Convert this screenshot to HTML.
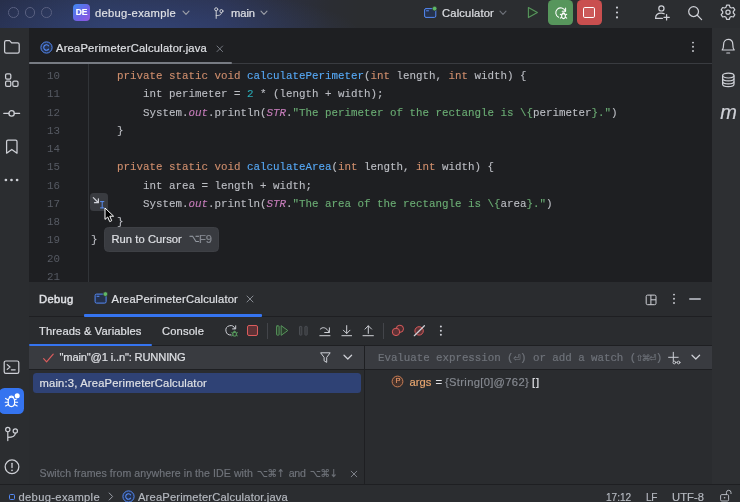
<!DOCTYPE html>
<html lang="en">
<head>
<meta charset="utf-8">
<title>debug-example – AreaPerimeterCalculator.java</title>
<style>
*{box-sizing:border-box;margin:0;padding:0}
html,body{width:740px;height:502px;overflow:hidden;background:#2b2d30}
body{position:relative;font-family:"Liberation Sans",sans-serif;font-size:11px;color:#dfe1e5;-webkit-font-smoothing:antialiased}
.abs{position:absolute}
.t{position:absolute;white-space:pre;line-height:14px;-webkit-text-stroke:0.18px currentColor}
svg{position:absolute;overflow:visible}

/* title bar */
#title{left:0;top:0;width:740px;height:28.5px;background:radial-gradient(ellipse 210px 46px at 150px 34px, rgba(58,84,160,.45) 0%, rgba(58,84,160,0) 100%),linear-gradient(90deg,#272f4b 0px,#2c3757 100px,#2c3350 220px,#2b2d33 330px,#2b2d30 360px,#2b2d30 740px)}
.dot{position:absolute;top:7.4px;width:10.8px;height:10.8px;border-radius:50%;border:1px solid #596080}

/* strips */
#lstrip{left:0;top:28px;width:29.5px;height:456px;background:#2b2d30;border-right:1px solid #1e1f22}
#rstrip{left:712px;top:28px;width:29px;height:456px;background:#2d2f32}

/* editor */
#editor{left:29px;top:28px;width:683px;height:254px;background:#1e1f22}
#tabline{left:29px;top:63px;width:683px;height:1px;background:#393b40}
#tabul{left:29px;top:61.7px;width:203px;height:2.5px;background:#777b83;border-radius:1px}
#gutline{left:88px;top:64px;width:1px;height:218px;background:#313438}
.ln{position:absolute;left:40px;width:20px;text-align:right;font-family:"Liberation Mono",monospace;font-size:10.8px;color:#565a63;line-height:14px}
.code{position:absolute;left:91px;white-space:pre;-webkit-text-stroke:0.12px currentColor;font-family:"Liberation Mono",monospace;font-size:10.83px;color:#bcbec4;line-height:14px}
.k{color:#cf8e6d}.f{color:#56a8f5}.n{color:#2aacb8}.s{color:#6aab73}.i{color:#c77dbb;font-style:italic}

/* debug panel */
#split{left:29px;top:282px;width:682px;height:2px;background:#2a2c2f}
#dbg{left:29px;top:282px;width:683px;height:202px;background:#2a2c2f}
.hl{position:absolute;height:1px;background:#1e1f22}

.sym{display:inline-flex;justify-content:center;width:6.5px;font-family:"DejaVu Sans","DejaVu Sans Mono",sans-serif;font-size:8.6px;letter-spacing:0;vertical-align:baseline}
.sy2{font-family:"DejaVu Sans","Liberation Sans",sans-serif}
/* status */
#status{left:0;top:484px;width:740px;height:18px;background:#2b2d30;border-top:1px solid #1e1f22}
</style>
</head>
<body>
<div id="root" style="position:absolute;left:0;top:0;width:740px;height:502px;will-change:transform">

<div id="title" class="abs"></div>
<div class="dot" style="left:8.1px"></div>
<div class="dot" style="left:24.7px"></div>
<div class="dot" style="left:41.1px"></div>


<!-- ===== title bar content ===== -->
<div class="abs" style="left:73px;top:4px;width:17px;height:17px;border-radius:4px;background:linear-gradient(135deg,#3d8bf0 0%,#6d63e8 55%,#9556e0 100%)"></div>
<div class="t" style="left:73px;top:6px;width:17px;text-align:center;font-weight:bold;font-size:8.5px;line-height:13px;color:#fff;letter-spacing:-0.2px">DE</div>
<div class="t" id="tproj" style="left:95px;top:6px;font-size:11.2px;letter-spacing:0.298px">debug-example</div>
<svg style="left:182px;top:10px" width="8" height="6" viewBox="0 0 8 6"><path d="M1 1.2 L4 4.3 L7 1.2" fill="none" stroke="#9da0a8" stroke-width="1.1" stroke-linecap="round" stroke-linejoin="round"/></svg>
<!-- branch icon -->
<svg style="left:212px;top:6px" width="12" height="14" viewBox="0 0 12 14"><g fill="none" stroke="#ced0d6" stroke-width="1" stroke-linecap="round"><circle cx="4.2" cy="3.3" r="1.55"/><circle cx="9.4" cy="5.1" r="1.55"/><path d="M4.2 4.9 V12.4 M9.4 6.7 C9.4 8.7 8 9.6 4.2 9.6"/></g></svg>
<div class="t" id="tmain" style="left:231px;top:6px;font-size:11.2px;letter-spacing:-0.062px">main</div>
<svg style="left:260px;top:10px" width="8" height="6" viewBox="0 0 8 6"><path d="M1 1.2 L4 4.3 L7 1.2" fill="none" stroke="#9da0a8" stroke-width="1.1" stroke-linecap="round" stroke-linejoin="round"/></svg>

<!-- run config -->
<svg style="left:424px;top:6px" width="14" height="13" viewBox="0 0 14 13"><rect x="0.6" y="2.6" width="11.2" height="8.8" rx="1.4" fill="#25324d" stroke="#548af7" stroke-width="1"/><path d="M2.5 4.8h2" stroke="#548af7" stroke-width="1" stroke-linecap="round"/><circle cx="10.6" cy="2.6" r="2.3" fill="#5fb865" stroke="#2b2d30" stroke-width="0.6"/></svg>
<div class="t" id="tcalc" style="left:442px;top:6px;font-size:11.2px;letter-spacing:0.163px">Calculator</div>
<svg style="left:499px;top:10px" width="8" height="6" viewBox="0 0 8 6"><path d="M1 1.2 L4 4.3 L7 1.2" fill="none" stroke="#6f737a" stroke-width="1.1" stroke-linecap="round" stroke-linejoin="round"/></svg>
<!-- play -->
<svg style="left:526px;top:6px" width="13" height="13" viewBox="0 0 13 13"><path d="M2.4 1.6 L11.4 6.6 L2.4 11.6 Z" fill="#27362a" stroke="#57965c" stroke-width="1.1" stroke-linejoin="round"/></svg>
<!-- green debug-rerun button -->
<div class="abs" style="left:548.2px;top:0.2px;width:25px;height:24.7px;border-radius:4.5px;background:#57965c"></div>
<svg style="left:554px;top:5px" width="15" height="15" viewBox="0 0 15 15"><g fill="none" stroke="#fff" stroke-width="1.05" stroke-linecap="round" stroke-linejoin="round"><path d="M11.3 6.1 A4.9 4.9 0 1 0 4.6 12.2"/><path d="M11.6 2.9 V6.3 H8.2"/><ellipse cx="9.5" cy="11.1" rx="1.9" ry="2.5" fill="#57965c"/><path d="M8.3 8.6 A1.3 1.3 0 0 1 10.7 8.6"/><path d="M7.6 10 L6.3 9.3 M7.6 12.2 L6.3 13.2 M11.4 10 L12.7 9.3 M11.4 12.2 L12.7 13.2"/></g></svg>
<!-- red stop button -->
<div class="abs" style="left:576.8px;top:0.2px;width:24.9px;height:24.7px;border-radius:4.5px;background:#c94f4f"></div>
<div class="abs" style="left:583.2px;top:6.9px;width:11.4px;height:11.2px;border:1.2px solid #fff;border-radius:1.8px;background:rgba(255,255,255,.07)"></div>
<!-- kebab -->
<svg style="left:615px;top:5px" width="4" height="15" viewBox="0 0 4 15"><g fill="#ced0d6"><circle cx="2" cy="2.6" r="1.05"/><circle cx="2" cy="7.5" r="1.05"/><circle cx="2" cy="12.4" r="1.05"/></g></svg>
<!-- add user -->
<svg style="left:654px;top:4px" width="17" height="17" viewBox="0 0 17 17"><g fill="none" stroke="#ced0d6" stroke-width="1.22" stroke-linecap="round" stroke-linejoin="round"><circle cx="7.4" cy="4.4" r="2.6"/><path d="M1.6 14.4 C1.6 10.8 4 9.2 7.2 9.2 C8.4 9.2 9.4 9.4 10.2 9.8"/><path d="M1.6 14.4 H8.4"/><path d="M12.6 10.6 V16 M9.9 13.3 H15.3"/></g></svg>
<!-- search -->
<svg style="left:687px;top:5px" width="16" height="16" viewBox="0 0 16 16"><g fill="none" stroke="#ced0d6" stroke-width="1.25" stroke-linecap="round"><circle cx="6.6" cy="6.6" r="4.9"/><path d="M10.3 10.3 L14.6 14.6"/></g></svg>
<!-- gear -->
<svg style="left:720px;top:4px" width="16" height="17" viewBox="0 0 16 17"><g fill="none" stroke="#ced0d6" stroke-width="1.22" stroke-linejoin="round"><path d="M6.6 1.2 H9.4 L10 3.3 L11.3 4 L13.4 3.5 L14.8 5.9 L13.3 7.5 V9 L14.8 10.6 L13.4 13 L11.3 12.5 L10 13.2 L9.4 15.3 H6.6 L6 13.2 L4.7 12.5 L2.6 13 L1.2 10.6 L2.7 9 V7.5 L1.2 5.9 L2.6 3.5 L4.7 4 L6 3.3 Z"/><circle cx="8" cy="8.25" r="2.1"/></g></svg>

<div id="lstrip" class="abs"></div>
<div id="rstrip" class="abs"></div>
<div id="editor" class="abs"></div>
<div id="tabline" class="abs"></div>
<div id="tabul" class="abs"></div>
<div id="gutline" class="abs"></div>

<!-- ===== left strip icons ===== -->
<svg style="left:3px;top:39px" width="18" height="16" viewBox="0 0 18 16"><path d="M1.6 3.2 Q1.6 1.6 3.2 1.6 H6.6 L8.6 3.8 H14.6 Q16.2 3.8 16.2 5.4 V12.6 Q16.2 14.2 14.6 14.2 H3.2 Q1.6 14.2 1.6 12.6 Z" fill="none" stroke="#ced0d6" stroke-width="1.25" stroke-linejoin="round"/></svg>
<svg style="left:4px;top:72px" width="16" height="16" viewBox="0 0 16 16"><g fill="none" stroke="#ced0d6" stroke-width="1.25"><rect x="1.6" y="1.8" width="5.2" height="5.2" rx="1.3"/><rect x="1.6" y="9.2" width="5.2" height="5.2" rx="1.3"/><rect x="8.8" y="9.2" width="5.2" height="5.2" rx="1.3"/></g></svg>
<svg style="left:3px;top:108px" width="18" height="10" viewBox="0 0 18 10"><g fill="none" stroke="#ced0d6" stroke-width="1.25" stroke-linecap="round"><circle cx="8.6" cy="5.4" r="2.7"/><path d="M0.8 5.4 H5.9 M11.3 5.4 H16.6"/></g></svg>
<svg style="left:5px;top:139px" width="14" height="16" viewBox="0 0 14 16"><path d="M1.6 2.6 Q1.6 1.2 3 1.2 H10.6 Q12 1.2 12 2.6 V14.2 L6.8 10.4 L1.6 14.2 Z" fill="none" stroke="#ced0d6" stroke-width="1.25" stroke-linejoin="round"/></svg>
<svg style="left:4px;top:178px" width="16" height="4" viewBox="0 0 16 4"><g fill="#ced0d6"><circle cx="1.9" cy="2" r="1.35"/><circle cx="7.5" cy="2" r="1.35"/><circle cx="13.1" cy="2" r="1.35"/></g></svg>
<!-- terminal -->
<svg style="left:3px;top:360px" width="18" height="15" viewBox="0 0 18 15"><g fill="none" stroke="#ced0d6" stroke-width="1.22" stroke-linecap="round" stroke-linejoin="round"><rect x="1.2" y="1" width="14.6" height="12.4" rx="1.6"/><path d="M4.2 4.6 L7 7 L4.2 9.4 M8.4 9.8 H12.2"/></g></svg>
<!-- debug (selected) -->
<div class="abs" style="left:-1px;top:388px;width:25px;height:25.5px;border-radius:5.5px;background:#3574f0"></div>
<svg style="left:3px;top:392px" width="18" height="18" viewBox="0 0 18 18"><g fill="none" stroke="#fff" stroke-width="1.15" stroke-linecap="round"><path d="M5.2 9.4 C5.2 6.6 6.6 5.2 8.4 5.2 C10.2 5.2 11.6 6.6 11.6 9.4 V10.6 C11.6 13 10.2 14.6 8.4 14.6 C6.6 14.6 5.2 13 5.2 10.6 Z"/><path d="M6.3 5.6 C6.3 3.6 10.5 3.6 10.5 5.6"/><path d="M5.2 8 L2.6 6.4 M5.2 10.2 H2.2 M5.2 12.4 L2.6 14 M11.6 8 L13.4 7 M11.6 10.2 H14.6 M11.6 12.4 L14.2 14"/></g><circle cx="14.2" cy="3.8" r="2.5" fill="#fff"/></svg>
<!-- git -->
<svg style="left:5px;top:425px" width="15" height="17" viewBox="0 0 15 17"><g fill="none" stroke="#ced0d6" stroke-width="1.22" stroke-linecap="round"><circle cx="2.8" cy="4.6" r="2.15"/><circle cx="10.3" cy="6" r="2.15"/><path d="M2.8 6.8 V15.6 M10.3 8.2 C10.3 11 8.5 12.4 2.8 12.4"/></g></svg>
<!-- problems -->
<svg style="left:3.6px;top:458.8px" width="16" height="16" viewBox="0 0 16 16"><circle cx="8" cy="7.8" r="6.85" fill="none" stroke="#ced0d6" stroke-width="1.25"/><path d="M8 4.3 V8.6" stroke="#ced0d6" stroke-width="1.3" stroke-linecap="round"/><circle cx="8" cy="11.3" r="0.85" fill="#ced0d6"/></svg>

<!-- ===== right strip icons ===== -->
<svg style="left:720px;top:38px" width="16" height="17" viewBox="0 0 16 17"><g fill="none" stroke="#ced0d6" stroke-width="1.22" stroke-linecap="round" stroke-linejoin="round"><path d="M2.2 12 C3.6 10.6 3.6 9.4 3.6 6.6 C3.6 3.4 5.6 1.4 8.2 1.4 C10.8 1.4 12.8 3.4 12.8 6.6 C12.8 9.4 12.8 10.6 14.2 12 Z"/><path d="M6.8 15 H9.6"/></g></svg>
<svg style="left:721px;top:72px" width="15" height="16" viewBox="0 0 15 16"><g fill="none" stroke="#ced0d6" stroke-width="1.22"><ellipse cx="7.3" cy="3.6" rx="5.7" ry="2.4"/><path d="M1.6 3.6 V12.2 C1.6 13.6 4.2 14.6 7.3 14.6 C10.4 14.6 13 13.6 13 12.2 V3.6"/><path d="M1.6 6.5 C1.6 7.9 4.2 8.9 7.3 8.9 C10.4 8.9 13 7.9 13 6.5 M1.6 9.4 C1.6 10.8 4.2 11.8 7.3 11.8 C10.4 11.8 13 10.8 13 9.4"/></g></svg>
<div class="t" style="left:719.5px;top:101.2px;width:18px;text-align:center;font-style:italic;font-size:20px;line-height:22px;color:#ced0d6">m</div>

<!-- ===== editor tab ===== -->
<svg style="left:40px;top:41px" width="13" height="13" viewBox="0 0 13 13"><circle cx="6.5" cy="6.5" r="5.6" fill="#25324d" stroke="#548af7" stroke-width="1"/><path d="M8.6 4.9 A2.7 2.7 0 1 0 8.6 8.1" fill="none" stroke="#548af7" stroke-width="1.05" stroke-linecap="round"/></svg>
<div class="t" id="ttab" style="left:56px;top:41px;font-size:11.2px;letter-spacing:0.196px">AreaPerimeterCalculator.java</div>
<svg style="left:216px;top:44.5px" width="8" height="8" viewBox="0 0 8 8"><path d="M1 1 L6.6 6.6 M6.6 1 L1 6.6" stroke="#747880" stroke-width="1" stroke-linecap="round"/></svg>
<svg style="left:691px;top:40px" width="4" height="14" viewBox="0 0 4 14"><g fill="#ced0d6"><circle cx="2" cy="2.6" r="0.95"/><circle cx="2" cy="6.8" r="0.95"/><circle cx="2" cy="11" r="0.95"/></g></svg>

<!-- ===== code ===== -->
<div class="ln" style="top:69.0px">10</div><div class="code" style="top:69.0px">    <span class="k">private static void</span> <span class="f">calculatePerimeter</span>(<span class="k">int</span> length, <span class="k">int</span> width) {</div>
<div class="ln" style="top:87.3px">11</div><div class="code" style="top:87.3px">        int perimeter = <span class="n">2</span> * (length + width);</div>
<div class="ln" style="top:105.5px">12</div><div class="code" style="top:105.5px">        System.<span class="i">out</span>.println(<span class="i">STR</span>.<span class="s">"The perimeter of the rectangle is \{</span>perimeter<span class="s">}."</span>)</div>
<div class="ln" style="top:123.8px">13</div><div class="code" style="top:123.8px">    }</div>
<div class="ln" style="top:142.1px">14</div>
<div class="ln" style="top:160.3px">15</div><div class="code" style="top:160.3px">    <span class="k">private static void</span> <span class="f">calculateArea</span>(<span class="k">int</span> length, <span class="k">int</span> width) {</div>
<div class="ln" style="top:178.6px">16</div><div class="code" style="top:178.6px">        int area = length + width;</div>
<div class="ln" style="top:196.9px">17</div><div class="code" style="top:196.9px">        System.<span class="i">out</span>.println(<span class="i">STR</span>.<span class="s">"The area of the rectangle is \{</span>area<span class="s">}."</span>)</div>
<div class="ln" style="top:215.2px">18</div><div class="code" style="top:215.2px">    }</div>
<div class="ln" style="top:233.4px">19</div><div class="code" style="top:233.4px">}</div>
<div class="ln" style="top:251.7px">20</div>
<div class="ln" style="top:270.0px">21</div>


<!-- ===== gutter run-to-cursor + tooltip + mouse ===== -->
<div class="abs" style="left:90px;top:192.5px;width:18px;height:18px;border-radius:3.5px;background:#393b40"></div>
<svg style="left:91px;top:194px" width="16" height="16" viewBox="0 0 16 16"><g fill="none" stroke-linecap="round" stroke-linejoin="round"><path d="M2.3 3.6 L7.2 8.5 M7.4 4.8 V8.7 H3.5" stroke="#ced0d6" stroke-width="1.22"/><path d="M9.5 7.6 H12.9 M9.5 13.9 H12.9 M11.2 7.6 V13.9" stroke="#5b90f8" stroke-width="0.95"/></g></svg>
<div class="abs" style="left:104.3px;top:226.6px;width:114.5px;height:25px;border-radius:4.5px;background:#393b40;border:1px solid #3e4045"></div>
<div class="t" id="ttip1" style="left:111.4px;top:231.9px;font-size:11.2px;color:#dfe1e5;letter-spacing:0.066px">Run to Cursor</div>
<div class="t sy2" id="ttip2" style="transform-origin:0 60%;transform:scaleY(1.2);left:189px;top:231.9px;font-size:9.2px;color:#959aa2;letter-spacing:-1.294px">⌥</div>
<div class="t" id="ttip3" style="left:199px;top:231.9px;font-size:11.2px;color:#868a91;letter-spacing:-0.181px">F9</div>
<svg style="left:103.7px;top:207.3px" width="12" height="17" viewBox="0 0 12 17"><path d="M1 1 V12.4 L3.7 10 L5.7 14.6 L7.7 13.7 L5.8 9.2 H9.6 Z" fill="#000" stroke="#fff" stroke-width="1" stroke-linejoin="round"/></svg>

<div id="split" class="abs"></div>
<div id="dbg" class="abs"></div>
<div id="status" class="abs"></div>


<!-- ===== debug panel ===== -->
<div class="t" id="tdebug" style="left:39px;top:292px;font-size:11.2px;-webkit-text-stroke:0.45px #dfe1e5;color:#dfe1e5;letter-spacing:0.306px">Debug</div>
<svg style="left:94px;top:291px" width="14" height="14" viewBox="0 0 14 14"><rect x="1.1" y="3.1" width="11" height="9" rx="1.4" fill="#25324d" stroke="#548af7" stroke-width="1"/><path d="M3 5.3h2" stroke="#548af7" stroke-width="1" stroke-linecap="round"/><circle cx="11.4" cy="3.1" r="2.3" fill="#5fb865" stroke="#2b2d30" stroke-width="0.6"/></svg>
<div class="t" id="tdtab" style="left:111.5px;top:292px;font-size:11.2px;letter-spacing:0.174px">AreaPerimeterCalculator</div>
<svg style="left:246px;top:295px" width="8" height="8" viewBox="0 0 8 8"><path d="M1 1 L7 7 M7 1 L1 7" stroke="#868a91" stroke-width="1" stroke-linecap="round"/></svg>
<div class="abs" style="left:84px;top:314px;width:178px;height:2.5px;background:#3574f0;border-radius:1px"></div>
<div class="hl" style="left:29px;top:316px;width:55px"></div>
<div class="hl" style="left:262px;top:316px;width:450px"></div>
<!-- header right icons -->
<svg style="left:645px;top:294px" width="12" height="12" viewBox="0 0 12 12"><g fill="none" stroke="#ced0d6" stroke-width="1"><rect x="1.2" y="1.1" width="9.8" height="9.6" rx="1.4"/><path d="M5.9 1.1 V10.7 M5.9 5.8 H11"/></g></svg>
<svg style="left:671.5px;top:292px" width="4" height="14" viewBox="0 0 4 14"><g fill="#ced0d6"><circle cx="2" cy="2.6" r="0.95"/><circle cx="2" cy="6.8" r="0.95"/><circle cx="2" cy="11" r="0.95"/></g></svg>
<div class="abs" style="left:689.3px;top:298.1px;width:11.4px;height:1.5px;background:#9ea1a8;border-radius:1px"></div>

<!-- sub tabs -->
<div class="t" id="tthr" style="left:39px;top:324px;font-size:11.2px;color:#dfe1e5;letter-spacing:0.104px">Threads &amp; Variables</div>
<div class="t" id="tcon" style="left:162px;top:324px;font-size:11.2px;color:#dfe1e5;letter-spacing:0.136px">Console</div>
<div class="hl" style="left:29px;top:345px;width:683px"></div>
<div class="abs" style="left:29px;top:344px;width:122.5px;height:2.3px;background:#3574f0;border-radius:1px"></div>

<!-- toolbar -->
<svg style="left:224px;top:324px" width="15" height="14" viewBox="0 0 15 14"><g fill="none" stroke="#ced0d6" stroke-width="1" stroke-linecap="round" stroke-linejoin="round"><path d="M11 4.7 A4.7 4.7 0 1 0 7 11"/><path d="M11.7 1.8 V4.9 H8.6"/></g><g fill="none" stroke="#5fad65" stroke-width="0.9" stroke-linecap="round"><rect x="8.9" y="8.2" width="3.4" height="3.9" rx="1.2"/><path d="M9.5 7.9 A1.2 1.2 0 0 1 11.7 7.9"/><path d="M8.9 9.3 L7.8 8.7 M8.9 11 L7.8 11.8 M12.3 9.3 L13.4 8.7 M12.3 11 L13.4 11.8"/></g></svg>
<div class="abs" style="left:247.4px;top:325.4px;width:10.8px;height:10.5px;border:1.1px solid #db5c5c;border-radius:2px;background:#5e3236"></div>
<div class="abs" style="left:267.2px;top:322.5px;width:1px;height:16px;background:#43454a"></div>
<svg style="left:275px;top:324px" width="14" height="14" viewBox="0 0 14 14"><g fill="#2a3b2c" stroke="#57965c" stroke-width="1" stroke-linejoin="round" stroke-linecap="round"><rect x="1.6" y="1.9" width="2.5" height="9.2" rx="0.5"/><path d="M6.5 1.9 L12.8 6.5 L6.5 11.1 Z"/></g></svg>
<svg style="left:298px;top:324px" width="12" height="14" viewBox="0 0 12 14"><g fill="#36383c" stroke="#4e5157" stroke-width="0.9"><rect x="1.5" y="2.4" width="2.3" height="8.7" rx="0.5"/><rect x="6.9" y="2.4" width="2.3" height="8.7" rx="0.5"/></g></svg>
<svg style="left:318px;top:324px" width="14" height="14" viewBox="0 0 14 14"><g fill="none" stroke="#ced0d6" stroke-width="1" stroke-linecap="round" stroke-linejoin="round"><path d="M2.2 5.2 C4.6 2.4 8.2 3.2 11.2 8.2"/><path d="M11.4 3.8 V8.5 H6.7"/><path d="M1.8 11.7 H12"/></g></svg>
<svg style="left:340px;top:324px" width="14" height="14" viewBox="0 0 14 14"><g fill="none" stroke="#ced0d6" stroke-width="1" stroke-linecap="round" stroke-linejoin="round"><path d="M6.7 1.6 V9.3 M3.4 6.2 L6.7 9.5 L10 6.2"/><path d="M1.9 11.7 H11.6"/></g></svg>
<svg style="left:361px;top:324px" width="14" height="14" viewBox="0 0 14 14"><g fill="none" stroke="#ced0d6" stroke-width="1" stroke-linecap="round" stroke-linejoin="round"><path d="M7.3 9.4 V1.9 M4 5.1 L7.3 1.8 L10.6 5.1"/><path d="M2 11.7 H12.4"/></g></svg>
<div class="abs" style="left:383px;top:322.5px;width:1px;height:16px;background:#43454a"></div>
<svg style="left:390px;top:324px" width="15" height="14" viewBox="0 0 15 14"><g stroke="#db5c5c" stroke-width="1"><circle cx="9.9" cy="4.8" r="3.6" fill="#4a2b2e"/><circle cx="6" cy="7.9" r="3.7" fill="#5e3236"/></g></svg>
<svg style="left:412px;top:324px" width="14" height="14" viewBox="0 0 14 14"><circle cx="7.1" cy="6.9" r="4.2" fill="#5e3236" stroke="#db5c5c" stroke-width="1"/><path d="M2.3 11.7 L12.4 1.7" stroke="#ced0d6" stroke-width="1.22" stroke-linecap="round"/></svg>
<svg style="left:439px;top:324px" width="4" height="14" viewBox="0 0 4 14"><g fill="#ced0d6"><circle cx="1.9" cy="2.6" r="1"/><circle cx="1.9" cy="6.7" r="1"/><circle cx="1.9" cy="10.8" r="1"/></g></svg>

<!-- threads row -->
<div class="abs" style="left:29px;top:346px;width:335px;height:23px;background:#393b40"></div>
<svg style="left:42px;top:351.5px" width="13" height="12" viewBox="0 0 13 12"><path d="M1.6 6.6 L4.6 9.8 L11.2 2.2" fill="none" stroke="#db5c5c" stroke-width="1.2" stroke-linecap="round" stroke-linejoin="round"/></svg>
<div class="t" id="tthread" style="left:59.5px;top:350.2px;font-size:11.2px;letter-spacing:-0.183px">"main"@1 i..n": RUNNING</div>
<svg style="left:319px;top:351px" width="13" height="13" viewBox="0 0 13 13"><path d="M1.6 1.8 H11.2 L7.7 6.4 V11.4 L5.1 9.8 V6.4 Z" fill="none" stroke="#ced0d6" stroke-width="1" stroke-linejoin="round"/></svg>
<svg style="left:343px;top:354px" width="10" height="7" viewBox="0 0 10 7"><path d="M1 1.2 L4.8 5 L8.6 1.2" fill="none" stroke="#ced0d6" stroke-width="1.22" stroke-linecap="round" stroke-linejoin="round"/></svg>

<!-- selected frame -->
<div class="abs" style="left:32.7px;top:373px;width:328.8px;height:19.5px;border-radius:3.5px;background:#2f4275"></div>
<div class="t" id="tframe" style="left:39.5px;top:376.1px;font-size:11.2px;letter-spacing:0.188px">main:3, AreaPerimeterCalculator</div>

<!-- evaluate row -->
<div class="abs" style="left:365px;top:346px;width:347px;height:23px;background:#393b40"></div>
<div class="t" id="teval" style="left:378px;top:350.5px;font-family:'Liberation Mono','DejaVu Sans Mono',monospace;font-size:10.83px;color:#6f737a;letter-spacing:-0.044px">Evaluate expression (<span class="sym">⏎</span>) or add a watch (<span class="sym">⇧</span><span class="sym">⌘</span><span class="sym">⏎</span>)</div>
<svg style="left:667px;top:350px" width="15" height="15" viewBox="0 0 15 15"><g fill="none" stroke="#ced0d6" stroke-width="1" stroke-linecap="round"><path d="M6.3 2.3 V11 M1.6 7.3 H11.2"/><circle cx="7.3" cy="12.5" r="1.35" stroke-width="0.9"/><circle cx="11.6" cy="12.5" r="1.35" stroke-width="0.9"/><path d="M8.8 12.3 H10.1" stroke-width="0.8"/></g></svg>
<svg style="left:691px;top:354px" width="10" height="7" viewBox="0 0 10 7"><path d="M1 1.2 L4.8 5 L8.6 1.2" fill="none" stroke="#ced0d6" stroke-width="1.22" stroke-linecap="round" stroke-linejoin="round"/></svg>

<div class="abs" style="left:364px;top:346px;width:1px;height:138px;background:#1e1f22"></div>
<div class="hl" style="left:29px;top:369px;width:683px"></div>
<!-- variable row -->
<svg style="left:391.2px;top:374.7px" width="13" height="13" viewBox="0 0 13 13"><circle cx="6.5" cy="6.5" r="5.4" fill="#45322b" stroke="#c77d55" stroke-width="1"/></svg>
<div class="t" style="left:391.4px;top:375.2px;width:13px;text-align:center;font-size:7.5px;line-height:12px;color:#e8996a">P</div>
<div class="t" id="targs" style="left:409.5px;top:374.5px;font-size:11.2px;color:#e8a670;letter-spacing:0.009px">args</div>
<div class="t" id="teq" style="left:435.4px;top:374.5px;font-size:11.2px;letter-spacing:-0.447px">=</div>
<div class="t" id="tstr" style="left:445px;top:374.5px;font-size:11.2px;color:#868a91;letter-spacing:0.322px">{String[0]@762}</div>
<div class="t" id="tbr" style="left:532px;top:374.5px;font-size:11.2px;letter-spacing:0.891px">[]</div>

<!-- hint -->
<div class="t" id="thint" style="left:39.5px;top:466px;font-size:10.6px;color:#6f737a;letter-spacing:0.063px">Switch frames from anywhere in the IDE with</div>
<div class="t sy2" id="thk1" style="transform-origin:0 60%;transform:scaleY(1.15);left:257px;top:466.5px;font-size:9.4px;color:#6f737a;letter-spacing:-0.182px">⌥⌘↑</div>
<div class="t" id="thand" style="left:288.8px;top:466px;font-size:10.6px;color:#6f737a;letter-spacing:-0.329px">and</div>
<div class="t sy2" id="thk2" style="transform-origin:0 60%;transform:scaleY(1.15);left:310px;top:466.5px;font-size:9.4px;color:#6f737a;letter-spacing:-0.182px">⌥⌘↓</div>
<svg style="left:349.5px;top:469.7px" width="9" height="9" viewBox="0 0 9 9"><path d="M1.2 1.2 L6.8 6.8 M6.8 1.2 L1.2 6.8" stroke="#7d8189" stroke-width="1" stroke-linecap="round"/></svg>

<!-- ===== status bar ===== -->
<div class="abs" style="left:8.5px;top:493.5px;width:6.5px;height:6.5px;border:1.1px solid #548af7;border-radius:1.5px"></div>
<div class="t" id="ts1" style="left:18.5px;top:489.5px;font-size:11.2px;color:#b4b8bf;letter-spacing:0.337px">debug-example</div>
<svg style="left:108px;top:492px" width="6" height="9" viewBox="0 0 6 9"><path d="M1.2 1 L4.6 4.5 L1.2 8" fill="none" stroke="#9da0a8" stroke-width="1" stroke-linecap="round" stroke-linejoin="round"/></svg>
<svg style="left:121.5px;top:490px" width="13" height="13" viewBox="0 0 13 13"><circle cx="6.5" cy="6.5" r="5.6" fill="#25324d" stroke="#548af7" stroke-width="1"/><path d="M8.6 4.9 A2.7 2.7 0 1 0 8.6 8.1" fill="none" stroke="#548af7" stroke-width="1.05" stroke-linecap="round"/></svg>
<div class="t" id="ts2" style="left:138px;top:489.5px;font-size:11.2px;color:#b4b8bf;letter-spacing:0.160px">AreaPerimeterCalculator.java</div>
<div class="t" id="ts3" style="transform-origin:0 0;transform:scaleX(.9);left:606px;top:489.5px;font-size:11.2px;color:#b4b8bf;letter-spacing:-0.040px">17:12</div>
<div class="t" id="ts4" style="transform-origin:0 0;transform:scaleX(.9);left:646px;top:489.5px;font-size:11.2px;color:#b4b8bf;letter-spacing:-0.378px">LF</div>
<div class="t" id="ts5" style="left:672px;top:489.5px;font-size:11.2px;color:#b4b8bf;letter-spacing:0.059px">UTF-8</div>
<svg style="left:719px;top:489px" width="14" height="13" viewBox="0 0 14 13"><g fill="none" stroke="#b4b8bf" stroke-width="1"><rect x="1.6" y="5.6" width="8" height="6.4" rx="1.2"/><path d="M7.4 5.6 V3.6 A2.3 2.3 0 0 1 12 3.6 V4.6" stroke-linecap="round"/></g><circle cx="5.6" cy="8.8" r="0.8" fill="#b4b8bf"/></svg>

</div>
</body>
</html>
